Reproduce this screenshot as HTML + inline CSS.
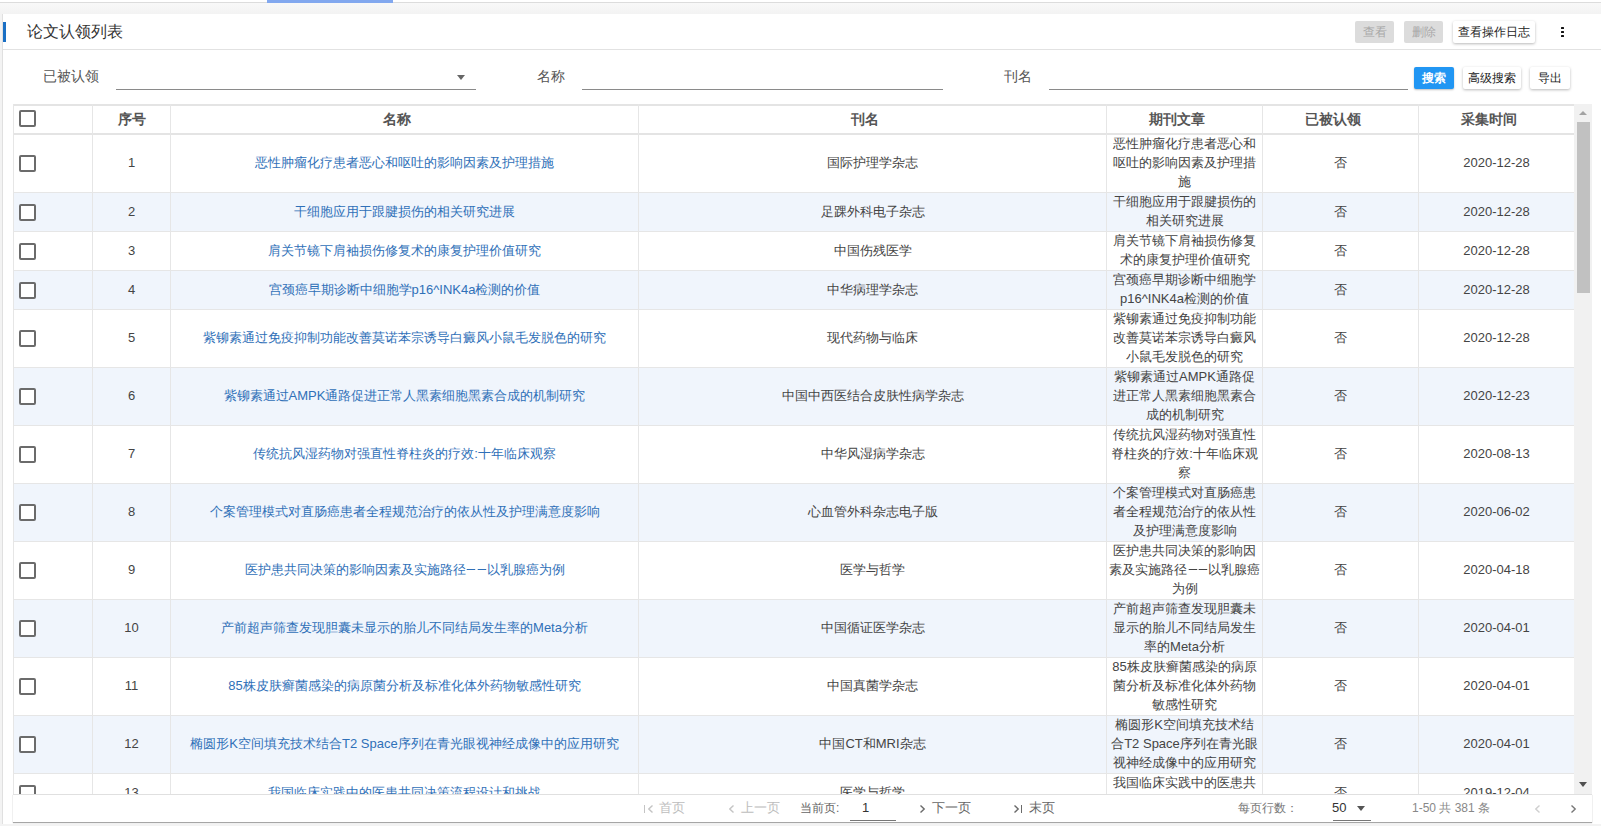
<!DOCTYPE html><html><head><meta charset="utf-8"><style>
*{box-sizing:border-box;margin:0;padding:0}
html,body{width:1601px;height:826px;overflow:hidden;background:#f3f3f3;font-family:"Liberation Sans",sans-serif;color:#333}
.a{position:absolute}
.card{position:absolute;left:2px;top:14px;width:1599px;height:810px;background:#fff;border-left:1px solid #e0e0e0}
.btn{position:absolute;height:22px;font-size:12px;line-height:22px;text-align:center;border-radius:2px}
.bd{background:#dcdcdc;color:#a8a8a8}
.bw{background:#fff;color:#222;box-shadow:0 1px 3px rgba(0,0,0,.28)}
.lbl{position:absolute;font-size:14px;color:#555;line-height:16px;white-space:nowrap}
.ul{position:absolute;height:1px;background:#8a8a8a}
.vl{position:absolute;width:1px;background:#e6e6e6}
.hl{position:absolute;height:1px;background:#e6e6e6}
.cell{position:absolute;color:#444;text-align:center;font-size:13px;line-height:19px;white-space:nowrap;display:flex;flex-direction:column;justify-content:center;align-items:center}
.hd{font-weight:bold;color:#555}
.lk{color:#2f70b8}
.cb{position:absolute;width:17px;height:17px;border:2px solid #6b6b6b;border-radius:2px;background:#fff}
.dd{display:inline-block;width:9.5px;height:1px;background:currentColor;vertical-align:middle;margin:0 0.5px;position:relative;top:-1px;transform:scaleX(.85)}
.pg{position:absolute;font-size:13px;line-height:16px;white-space:nowrap}
</style></head><body>
<div class="a" style="left:0;top:0;width:1601px;height:2px;background:#fff"></div>
<div class="a" style="left:0;top:2px;width:1601px;height:1px;background:#dcdcdc"></div>
<div class="a" style="left:0;top:3px;width:1601px;height:11px;background:linear-gradient(#f8f8f8,#f3f3f3)"></div>
<div class="a" style="left:267px;top:0;width:126px;height:3px;background:#82a8ef"></div>
<div class="card"></div>
<div class="a" style="left:3px;top:22px;width:3px;height:20px;background:#1a6fc4"></div>
<div class="a" style="left:27px;top:22px;font-size:16px;line-height:20px;color:#333;white-space:nowrap">论文认领列表</div>
<div class="a" style="left:3px;top:49px;width:1598px;height:1px;background:#e2e2e2"></div>
<div class="btn bd" style="left:1355px;top:21px;width:39px">查看</div>
<div class="btn bd" style="left:1404px;top:21px;width:39px">删除</div>
<div class="btn bw" style="left:1453px;top:21px;width:82px">查看操作日志</div>
<div class="a" style="left:1561px;top:27px;width:3px;height:2px;background:#111;border-radius:0.5px"></div>
<div class="a" style="left:1561px;top:31px;width:3px;height:2px;background:#111;border-radius:0.5px"></div>
<div class="a" style="left:1561px;top:35px;width:3px;height:2px;background:#111;border-radius:0.5px"></div>

<div class="lbl" style="left:43px;top:68px">已被认领</div>
<div class="ul" style="left:116px;top:89px;width:360px"></div>
<div class="a" style="left:457px;top:75px;width:0;height:0;border-left:4.5px solid transparent;border-right:4.5px solid transparent;border-top:5px solid #666"></div>
<div class="lbl" style="left:537px;top:68px">名称</div>
<div class="ul" style="left:582px;top:89px;width:361px"></div>
<div class="lbl" style="left:1004px;top:68px">刊名</div>
<div class="ul" style="left:1049px;top:89px;width:359px"></div>
<div class="btn" style="left:1414px;top:67px;width:40px;height:22px;line-height:22px;background:#2196f3;color:#fff;font-weight:bold;box-shadow:0 1px 2px rgba(0,0,0,.25)">搜索</div>
<div class="btn bw" style="left:1463px;top:67px;width:58px;height:22px;line-height:22px">高级搜索</div>
<div class="btn bw" style="left:1530px;top:67px;width:40px;height:22px;line-height:22px">导出</div>
<div class="a" style="left:13px;top:104px;width:1579px;height:690px;overflow:hidden;background:#fff">
<div class="a" style="left:0;top:89px;width:1561px;height:38px;background:#f0f5fc"></div>
<div class="a" style="left:0;top:167px;width:1561px;height:38px;background:#f0f5fc"></div>
<div class="a" style="left:0;top:264px;width:1561px;height:57px;background:#f0f5fc"></div>
<div class="a" style="left:0;top:380px;width:1561px;height:57px;background:#f0f5fc"></div>
<div class="a" style="left:0;top:496px;width:1561px;height:57px;background:#f0f5fc"></div>
<div class="a" style="left:0;top:612px;width:1561px;height:57px;background:#f0f5fc"></div>
<div class="hl" style="left:0;top:0;width:1579px;height:2px;background:#e4e4e4"></div>
<div class="hl" style="left:0;top:29px;width:1561px;height:2px;background:#e4e4e4"></div>
<div class="hl" style="left:0;top:88px;width:1561px"></div>
<div class="hl" style="left:0;top:127px;width:1561px"></div>
<div class="hl" style="left:0;top:166px;width:1561px"></div>
<div class="hl" style="left:0;top:205px;width:1561px"></div>
<div class="hl" style="left:0;top:263px;width:1561px"></div>
<div class="hl" style="left:0;top:321px;width:1561px"></div>
<div class="hl" style="left:0;top:379px;width:1561px"></div>
<div class="hl" style="left:0;top:437px;width:1561px"></div>
<div class="hl" style="left:0;top:495px;width:1561px"></div>
<div class="hl" style="left:0;top:553px;width:1561px"></div>
<div class="hl" style="left:0;top:611px;width:1561px"></div>
<div class="hl" style="left:0;top:669px;width:1561px"></div>
<div class="hl" style="left:0;top:708px;width:1561px"></div>
<div class="vl" style="left:0px;top:0;height:690px"></div>
<div class="vl" style="left:79px;top:0;height:690px"></div>
<div class="vl" style="left:157px;top:0;height:690px"></div>
<div class="vl" style="left:625px;top:0;height:690px"></div>
<div class="vl" style="left:1093px;top:0;height:690px"></div>
<div class="vl" style="left:1249px;top:0;height:690px"></div>
<div class="vl" style="left:1405px;top:0;height:690px"></div>
<div class="cell hd" style="left:80px;top:1px;width:77px;height:28px;font-size:14px">序号</div>
<div class="cell hd" style="left:158px;top:1px;width:451px;height:28px;font-size:14px">名称</div>
<div class="cell hd" style="left:626px;top:1px;width:451px;height:28px;font-size:14px">刊名</div>
<div class="cell hd" style="left:1094px;top:1px;width:139px;height:28px;font-size:14px">期刊文章</div>
<div class="cell hd" style="left:1250px;top:1px;width:139px;height:28px;font-size:14px">已被认领</div>
<div class="cell hd" style="left:1406px;top:1px;width:139px;height:28px;font-size:14px">采集时间</div>
<div class="cb" style="left:6px;top:6px"></div>
<div class="cb" style="left:6px;top:51.0px"></div>
<div class="cell" style="left:80px;top:30px;width:77px;height:57px"><div>1</div></div>
<div class="cell" style="left:158px;top:30px;width:467px;height:57px"><div><span class="lk">恶性肿瘤化疗患者恶心和呕吐的影响因素及护理措施</span></div></div>
<div class="cell" style="left:626px;top:30px;width:467px;height:57px"><div>国际护理学杂志</div></div>
<div class="cell" style="left:1094px;top:30px;width:155px;height:57px"><div>恶性肿瘤化疗患者恶心和<br>呕吐的影响因素及护理措<br>施</div></div>
<div class="cell" style="left:1250px;top:30px;width:155px;height:57px"><div>否</div></div>
<div class="cell" style="left:1406px;top:30px;width:155px;height:57px"><div>2020-12-28</div></div>
<div class="cb" style="left:6px;top:99.5px"></div>
<div class="cell" style="left:80px;top:88px;width:77px;height:38px"><div>2</div></div>
<div class="cell" style="left:158px;top:88px;width:467px;height:38px"><div><span class="lk">干细胞应用于跟腱损伤的相关研究进展</span></div></div>
<div class="cell" style="left:626px;top:88px;width:467px;height:38px"><div>足踝外科电子杂志</div></div>
<div class="cell" style="left:1094px;top:88px;width:155px;height:38px"><div>干细胞应用于跟腱损伤的<br>相关研究进展</div></div>
<div class="cell" style="left:1250px;top:88px;width:155px;height:38px"><div>否</div></div>
<div class="cell" style="left:1406px;top:88px;width:155px;height:38px"><div>2020-12-28</div></div>
<div class="cb" style="left:6px;top:138.5px"></div>
<div class="cell" style="left:80px;top:127px;width:77px;height:38px"><div>3</div></div>
<div class="cell" style="left:158px;top:127px;width:467px;height:38px"><div><span class="lk">肩关节镜下肩袖损伤修复术的康复护理价值研究</span></div></div>
<div class="cell" style="left:626px;top:127px;width:467px;height:38px"><div>中国伤残医学</div></div>
<div class="cell" style="left:1094px;top:127px;width:155px;height:38px"><div>肩关节镜下肩袖损伤修复<br>术的康复护理价值研究</div></div>
<div class="cell" style="left:1250px;top:127px;width:155px;height:38px"><div>否</div></div>
<div class="cell" style="left:1406px;top:127px;width:155px;height:38px"><div>2020-12-28</div></div>
<div class="cb" style="left:6px;top:177.5px"></div>
<div class="cell" style="left:80px;top:166px;width:77px;height:38px"><div>4</div></div>
<div class="cell" style="left:158px;top:166px;width:467px;height:38px"><div><span class="lk">宫颈癌早期诊断中细胞学p16^INK4a检测的价值</span></div></div>
<div class="cell" style="left:626px;top:166px;width:467px;height:38px"><div>中华病理学杂志</div></div>
<div class="cell" style="left:1094px;top:166px;width:155px;height:38px"><div>宫颈癌早期诊断中细胞学<br>p16^INK4a检测的价值</div></div>
<div class="cell" style="left:1250px;top:166px;width:155px;height:38px"><div>否</div></div>
<div class="cell" style="left:1406px;top:166px;width:155px;height:38px"><div>2020-12-28</div></div>
<div class="cb" style="left:6px;top:226.0px"></div>
<div class="cell" style="left:80px;top:205px;width:77px;height:57px"><div>5</div></div>
<div class="cell" style="left:158px;top:205px;width:467px;height:57px"><div><span class="lk">紫铆素通过免疫抑制功能改善莫诺苯宗诱导白癜风小鼠毛发脱色的研究</span></div></div>
<div class="cell" style="left:626px;top:205px;width:467px;height:57px"><div>现代药物与临床</div></div>
<div class="cell" style="left:1094px;top:205px;width:155px;height:57px"><div>紫铆素通过免疫抑制功能<br>改善莫诺苯宗诱导白癜风<br>小鼠毛发脱色的研究</div></div>
<div class="cell" style="left:1250px;top:205px;width:155px;height:57px"><div>否</div></div>
<div class="cell" style="left:1406px;top:205px;width:155px;height:57px"><div>2020-12-28</div></div>
<div class="cb" style="left:6px;top:284.0px"></div>
<div class="cell" style="left:80px;top:263px;width:77px;height:57px"><div>6</div></div>
<div class="cell" style="left:158px;top:263px;width:467px;height:57px"><div><span class="lk">紫铆素通过AMPK通路促进正常人黑素细胞黑素合成的机制研究</span></div></div>
<div class="cell" style="left:626px;top:263px;width:467px;height:57px"><div>中国中西医结合皮肤性病学杂志</div></div>
<div class="cell" style="left:1094px;top:263px;width:155px;height:57px"><div>紫铆素通过AMPK通路促<br>进正常人黑素细胞黑素合<br>成的机制研究</div></div>
<div class="cell" style="left:1250px;top:263px;width:155px;height:57px"><div>否</div></div>
<div class="cell" style="left:1406px;top:263px;width:155px;height:57px"><div>2020-12-23</div></div>
<div class="cb" style="left:6px;top:342.0px"></div>
<div class="cell" style="left:80px;top:321px;width:77px;height:57px"><div>7</div></div>
<div class="cell" style="left:158px;top:321px;width:467px;height:57px"><div><span class="lk">传统抗风湿药物对强直性脊柱炎的疗效:十年临床观察</span></div></div>
<div class="cell" style="left:626px;top:321px;width:467px;height:57px"><div>中华风湿病学杂志</div></div>
<div class="cell" style="left:1094px;top:321px;width:155px;height:57px"><div>传统抗风湿药物对强直性<br>脊柱炎的疗效:十年临床观<br>察</div></div>
<div class="cell" style="left:1250px;top:321px;width:155px;height:57px"><div>否</div></div>
<div class="cell" style="left:1406px;top:321px;width:155px;height:57px"><div>2020-08-13</div></div>
<div class="cb" style="left:6px;top:400.0px"></div>
<div class="cell" style="left:80px;top:379px;width:77px;height:57px"><div>8</div></div>
<div class="cell" style="left:158px;top:379px;width:467px;height:57px"><div><span class="lk">个案管理模式对直肠癌患者全程规范治疗的依从性及护理满意度影响</span></div></div>
<div class="cell" style="left:626px;top:379px;width:467px;height:57px"><div>心血管外科杂志电子版</div></div>
<div class="cell" style="left:1094px;top:379px;width:155px;height:57px"><div>个案管理模式对直肠癌患<br>者全程规范治疗的依从性<br>及护理满意度影响</div></div>
<div class="cell" style="left:1250px;top:379px;width:155px;height:57px"><div>否</div></div>
<div class="cell" style="left:1406px;top:379px;width:155px;height:57px"><div>2020-06-02</div></div>
<div class="cb" style="left:6px;top:458.0px"></div>
<div class="cell" style="left:80px;top:437px;width:77px;height:57px"><div>9</div></div>
<div class="cell" style="left:158px;top:437px;width:467px;height:57px"><div><span class="lk">医护患共同决策的影响因素及实施路径<span class="dd"></span><span class="dd"></span>以乳腺癌为例</span></div></div>
<div class="cell" style="left:626px;top:437px;width:467px;height:57px"><div>医学与哲学</div></div>
<div class="cell" style="left:1094px;top:437px;width:155px;height:57px"><div>医护患共同决策的影响因<br>素及实施路径<span class="dd"></span><span class="dd"></span>以乳腺癌<br>为例</div></div>
<div class="cell" style="left:1250px;top:437px;width:155px;height:57px"><div>否</div></div>
<div class="cell" style="left:1406px;top:437px;width:155px;height:57px"><div>2020-04-18</div></div>
<div class="cb" style="left:6px;top:516.0px"></div>
<div class="cell" style="left:80px;top:495px;width:77px;height:57px"><div>10</div></div>
<div class="cell" style="left:158px;top:495px;width:467px;height:57px"><div><span class="lk">产前超声筛查发现胆囊未显示的胎儿不同结局发生率的Meta分析</span></div></div>
<div class="cell" style="left:626px;top:495px;width:467px;height:57px"><div>中国循证医学杂志</div></div>
<div class="cell" style="left:1094px;top:495px;width:155px;height:57px"><div>产前超声筛查发现胆囊未<br>显示的胎儿不同结局发生<br>率的Meta分析</div></div>
<div class="cell" style="left:1250px;top:495px;width:155px;height:57px"><div>否</div></div>
<div class="cell" style="left:1406px;top:495px;width:155px;height:57px"><div>2020-04-01</div></div>
<div class="cb" style="left:6px;top:574.0px"></div>
<div class="cell" style="left:80px;top:553px;width:77px;height:57px"><div>11</div></div>
<div class="cell" style="left:158px;top:553px;width:467px;height:57px"><div><span class="lk">85株皮肤癣菌感染的病原菌分析及标准化体外药物敏感性研究</span></div></div>
<div class="cell" style="left:626px;top:553px;width:467px;height:57px"><div>中国真菌学杂志</div></div>
<div class="cell" style="left:1094px;top:553px;width:155px;height:57px"><div>85株皮肤癣菌感染的病原<br>菌分析及标准化体外药物<br>敏感性研究</div></div>
<div class="cell" style="left:1250px;top:553px;width:155px;height:57px"><div>否</div></div>
<div class="cell" style="left:1406px;top:553px;width:155px;height:57px"><div>2020-04-01</div></div>
<div class="cb" style="left:6px;top:632.0px"></div>
<div class="cell" style="left:80px;top:611px;width:77px;height:57px"><div>12</div></div>
<div class="cell" style="left:158px;top:611px;width:467px;height:57px"><div><span class="lk">椭圆形K空间填充技术结合T2 Space序列在青光眼视神经成像中的应用研究</span></div></div>
<div class="cell" style="left:626px;top:611px;width:467px;height:57px"><div>中国CT和MRI杂志</div></div>
<div class="cell" style="left:1094px;top:611px;width:155px;height:57px"><div>椭圆形K空间填充技术结<br>合T2 Space序列在青光眼<br>视神经成像中的应用研究</div></div>
<div class="cell" style="left:1250px;top:611px;width:155px;height:57px"><div>否</div></div>
<div class="cell" style="left:1406px;top:611px;width:155px;height:57px"><div>2020-04-01</div></div>
<div class="cb" style="left:6px;top:680.5px"></div>
<div class="cell" style="left:80px;top:669px;width:77px;height:38px"><div>13</div></div>
<div class="cell" style="left:158px;top:669px;width:467px;height:38px"><div><span class="lk">我国临床实践中的医患共同决策流程设计和挑战</span></div></div>
<div class="cell" style="left:626px;top:669px;width:467px;height:38px"><div>医学与哲学</div></div>
<div class="cell" style="left:1094px;top:669px;width:155px;height:38px"><div>我国临床实践中的医患共<br>同决策流程设计和挑战</div></div>
<div class="cell" style="left:1250px;top:669px;width:155px;height:38px"><div>否</div></div>
<div class="cell" style="left:1406px;top:669px;width:155px;height:38px"><div>2019-12-04</div></div>
<div class="a" style="left:1561px;top:0;width:18px;height:690px;background:#f1f1f1"></div>
<div class="a" style="left:1566px;top:7px;width:0;height:0;border-left:4px solid transparent;border-right:4px solid transparent;border-bottom:4px solid #a3a3a3"></div>
<div class="a" style="left:1564px;top:18px;width:13px;height:171px;background:#c1c1c1"></div>
<div class="a" style="left:1566px;top:678px;width:0;height:0;border-left:4px solid transparent;border-right:4px solid transparent;border-top:5px solid #505050"></div>
</div>
<div class="a" style="left:13px;top:794px;width:1579px;height:28px;background:#fff;border-top:1px solid #e0e0e0;box-shadow:0 1px 1px rgba(0,0,0,.35)"></div>
<svg class="a" style="left:648px;top:805px" width="12" height="9" viewBox="0 0 12 9"><path d="M4.5,0.5 L0.8,4 L4.5,7.5" fill="none" stroke="#c4c4c4" stroke-width="1.4"/></svg>
<div class="a" style="left:644px;top:805px;width:1.2px;height:8px;background:#c4c4c4"></div>
<div class="pg" style="left:659px;top:800px;color:#bdbdbd">首页</div>
<svg class="a" style="left:729px;top:805px" width="12" height="9" viewBox="0 0 12 9"><path d="M4.5,0.5 L0.8,4 L4.5,7.5" fill="none" stroke="#c4c4c4" stroke-width="1.4"/></svg>
<div class="pg" style="left:741px;top:800px;color:#bdbdbd">上一页</div>
<div class="pg" style="left:800px;top:800px;color:#666;font-size:12px">当前页:</div>
<div class="pg" style="left:862px;top:800px;color:#333">1</div>
<div class="ul" style="left:850px;top:820px;width:46px;background:#777"></div>
<svg class="a" style="left:919.5px;top:805px" width="12" height="9" viewBox="0 0 12 9"><path d="M0.5,0.5 L4.2,4 L0.5,7.5" fill="none" stroke="#6a6a6a" stroke-width="1.4"/></svg>
<div class="pg" style="left:932px;top:800px;color:#666">下一页</div>
<svg class="a" style="left:1014px;top:805px" width="12" height="9" viewBox="0 0 12 9"><path d="M0.5,0.5 L4.2,4 L0.5,7.5" fill="none" stroke="#6a6a6a" stroke-width="1.4"/></svg>
<div class="a" style="left:1021px;top:805px;width:1.2px;height:8px;background:#6a6a6a"></div>
<div class="pg" style="left:1029px;top:800px;color:#666">末页</div>
<div class="pg" style="left:1238px;top:800px;color:#777;font-size:12px">每页行数：</div>
<div class="pg" style="left:1332px;top:800px;color:#333">50</div>
<div class="a" style="left:1357px;top:806px;width:0;height:0;border-left:4.5px solid transparent;border-right:4.5px solid transparent;border-top:5px solid #555"></div>
<div class="ul" style="left:1333px;top:820px;width:38px;background:#777"></div>
<div class="pg" style="left:1412px;top:800px;color:#888;font-size:12px">1-50 共 381 条</div>
<svg class="a" style="left:1535px;top:805px" width="12" height="9" viewBox="0 0 12 9"><path d="M4.5,0.5 L0.8,4 L4.5,7.5" fill="none" stroke="#cfcfcf" stroke-width="1.4"/></svg>
<svg class="a" style="left:1571px;top:805px" width="12" height="9" viewBox="0 0 12 9"><path d="M0.5,0.5 L4.2,4 L0.5,7.5" fill="none" stroke="#777" stroke-width="1.4"/></svg>
</body></html>
